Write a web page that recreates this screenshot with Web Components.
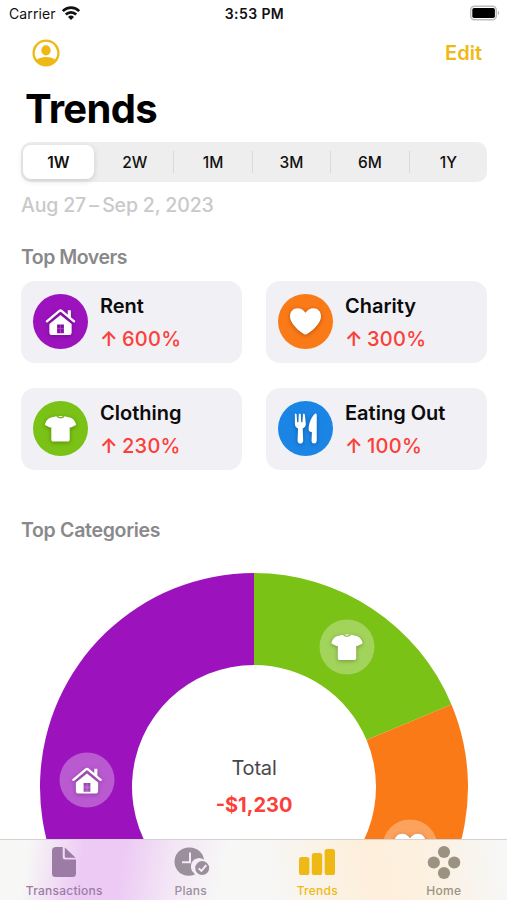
<!DOCTYPE html>
<html lang="en">
<head>
<meta charset="utf-8">
<meta name="viewport" content="width=device-width, initial-scale=1">
<title>Trends</title>
<style>
    * {
        box-sizing: border-box;
    }
    html, body {
        margin: 0;
        height: 900px;
        overflow: hidden;
        background: #fff;
        font-family: Inter, "Liberation Sans", sans-serif;
    }
</style>
</head>
<body>
<trends-app></trends-app>
<script>
const ICONS = {
    house: `<svg viewBox="0 0 32 32"><path d="M2 15.8 14.6 5.3a2.2 2.2 0 0 1 2.8 0L30 15.8" fill="none" stroke="currentColor" stroke-width="2.5" stroke-linecap="round" stroke-linejoin="round"/><path d="M23.5 4.5h3.2v8l-3.2-2.7z"/><path fill-rule="evenodd" d="M16 9.3 27.500 18.5V27a3 3 0 0 1-3 3h-17a3 3 0 0 1-3-3v-8.500zM12.500 19v9h7V19z"/><path d="M15.600 19h.8v9h-.8zM12.500 23h7v.8h-7z" opacity=".25"/></svg>`,
    heart: `<svg viewBox="0 0 32 32"><path d="M16 29.500C14.500 29.500 0 20 0 10.500 0 5.300 3.500 2.200 7.800 2.200c3.600 0 6.300 1.800 8.200 4.700 1.900-2.900 4.600-4.700 8.200-4.700C28.500 2.200 32 5.300 32 10.500c0 9.500-14.500 19-16 19z"/></svg>`,
    shirt: `<svg viewBox="0 0 32 32"><path d="M11.800 3.400c1.400 2.800 7 2.800 8.400 0l5.500 1.200c3 .8 4.700 2.500 6.200 6.400.3.900 0 1.400-.8 1.800l-4.300 2.200c-.8.300-1.300.1-1.300-.7v12.500c0 1.800-.8 2.700-2.500 2.700H9c-1.700 0-2.500-.9-2.500-2.700V14.300c0 .8-.5 1-1.300.7L.9 12.800c-.8-.4-1.100-.9-.8-1.800 1.500-3.900 3.200-5.600 6.200-6.400z"/><path d="M13.500 3.200h5c-.9 1.500-4.100 1.500-5 0z"/></svg>`,
    fork: `<svg viewBox="0 0 32 32"><path d="M5 1.200q.9-1.400 1.800 0l.6 8.300h1.200l.5-8.300q1-1.400 2 0l.5 8.300h1.200l.6-8.300q.9-1.400 1.800 0l1.100 9.300c.3 2.900-1 4.500-3.200 5.600l.5 12.600q-.3 2.900-2.900 2.900t-2.900-2.900l.5-12.600c-2.200-1.100-3.500-2.700-3.200-5.600z"/><path d="M27.600 2v26.900q-.3 2.700-2.700 2.700t-2.700-2.700l.4-9.100c-2.700-.4-3.600-1.500-3.300-4.200.4-5.200 2.900-11.800 6.400-14.700q1.700-.9 1.900 1.100z"/></svg>`,
    person: `<svg viewBox="0 0 28 28"><path fill-rule="evenodd" d="M14 .4a13.600 13.600 0 1 1 0 27.200A13.600 13.600 0 0 1 14 .4zm0 2.400a11.200 11.200 0 0 0-9 17.800c2-1.700 5.100-2.700 9-2.700s7 1 9 2.700A11.200 11.200 0 0 0 14 2.800z"/><ellipse cx="14" cy="11.400" rx="4.700" ry="5.100"/></svg>`,
    wifi: `<svg viewBox="0 0 18 14"><g fill="none" stroke="currentColor" stroke-width="2.700"><path d="M.8 5.100a11.600 11.600 0 0 1 16.400 0"/><path d="M3.800 8.500a7.400 7.400 0 0 1 10.400 0"/></g><path d="m9 14-3-3a4.300 4.300 0 0 1 6 0z"/></svg>`,
    battery: `<svg viewBox="0 0 30 14"><rect x=".7" y=".2" width="25.600" height="13.600" rx="3.800" fill="#fff" stroke="#bcbcbc" stroke-width="1.500"/><rect x="2.300" y="2" width="22.600" height="10" rx="1.800"/><path d="M27.800 4.800c2 .8 2 3.600 0 4.400z" fill="#bcbcbc"/></svg>`,
    document: `<svg viewBox="0 0 36 34"><path d="M10 2h6.700v10a2.500 2.500 0 0 0 2.500 2.500H30V28.500a3.500 3.500 0 0 1-3.500 3.500H9.500A3.500 3.500 0 0 1 6 28.500V6a4 4 0 0 1 4-4z"/><path d="M18.800 2.400 29.600 12.700h-9.700a1.100 1.100 0 0 1-1.100-1.100z"/></svg>`,
    clock: `<svg viewBox="0 0 36 34"><g transform="translate(1 .5)"><path fill-rule="evenodd" d="M16 2a14.200 14.200 0 0 1 14 12.200 8.300 8.300 0 0 0-9.800 13.500c.3.700.7 1.200.7 1.200A14.200 14.200 0 1 1 16 2zm-1 5v8.800H8v1.900h9V7z"/><path fill-rule="evenodd" d="M28.200 15.600a7 7 0 1 1 0 14 7 7 0 0 1 0-14zm3.300 3.500-4.200 5-2-1.900-1.300 1.300 3.500 3.300 5.500-6.600z"/></g></svg>`,
    bars: `<svg viewBox="0 0 36 34"><rect y="12" width="10.400" height="18" rx="2.600"/><rect x="12.800" y="8" width="10.400" height="22" rx="2.600"/><rect x="25.600" y="4" width="10.400" height="26" rx="2.600"/></svg>`,
    dots: `<svg viewBox="0 0 36 34"><circle cx="18" cy="7" r="6.100"/><circle cx="7.800" cy="17.500" r="6.100"/><circle cx="28.200" cy="17.500" r="6.100"/><circle cx="18" cy="28" r="6.100"/></svg>`
};

class AppIcon extends HTMLElement {

    constructor() {
        super();
        this.shadowDOM = this.attachShadow({ mode: "open" });
    }

    connectedCallback() {
        this.shadowDOM.innerHTML = `
        <style>
            :host {
                display: block;
                flex: none;
            }
            svg {
                display: block;
                width: 100%;
                height: 100%;
                fill: currentColor;
                overflow: visible;
            }
        </style>
        ${ICONS[this.getAttribute("name")]}`;
    }
}

customElements.define("app-icon", AppIcon);

class StatusBar extends HTMLElement {

    constructor() {
        super();
        this.shadowDOM = this.attachShadow({ mode: "open" });
        this.shadowDOM.innerHTML = `
        <style>
            :host {
                display: grid;
                grid-template-columns: 1fr auto 1fr;
                align-items: center;
                height: 28px;
                padding: 0 7px 0 9px;
                color: #111;
                font-size: 14px;
                line-height: 18px;
            }
            .carrier {
                display: flex;
                align-items: center;
                gap: 6px;
                letter-spacing: 0.1px;
            }
            .time {
                font-weight: 600;
                letter-spacing: 0.4px;
            }
            .wifi {
                width: 18px;
                height: 14px;
                margin-top: -2px;
            }
            .battery {
                width: 30px;
                height: 14px;
                justify-self: end;
                margin-top: -2px;
                color: #000;
            }
        </style>
        <div class="carrier"><span>Carrier</span><app-icon class="wifi" name="wifi"></app-icon></div>
        <div class="time">3:53 PM</div>
        <app-icon class="battery" name="battery"></app-icon>`;
    }
}

customElements.define("status-bar", StatusBar);

class NavHeader extends HTMLElement {

    constructor() {
        super();
        this.shadowDOM = this.attachShadow({ mode: "open" });
        this.shadowDOM.innerHTML = `
        <style>
            :host {
                display: block;
            }
            .actions {
                display: flex;
                justify-content: space-between;
                align-items: center;
                height: 50px;
                padding: 0 25px 0 32px;
                color: #efb915;
            }
            app-icon {
                width: 28px;
                height: 28px;
            }
            .edit {
                font-size: 20px;
                font-weight: 600;
            }
            h1 {
                margin: 0;
                padding: 6px 25px 0;
                font-size: 40px;
                line-height: 50px;
                font-weight: 700;
                letter-spacing: -0.7px;
                color: #000;
            }
        </style>
        <div class="actions">
            <app-icon name="person"></app-icon>
            <span class="edit">Edit</span>
        </div>
        <h1><slot></slot></h1>`;
    }
}

customElements.define("nav-header", NavHeader);

class SegmentedControl extends HTMLElement {

    constructor() {
        super();
        this.shadowDOM = this.attachShadow({ mode: "open" });
    }

    connectedCallback() {
        const items = this.getAttribute("items").split(",");
        this.shadowDOM.innerHTML = `
        <style>
            :host {
                display: flex;
                align-items: center;
                height: 40px;
                border-radius: 10px;
                background: #eee;
                color: #111;
                font-size: 15.5px;
                font-weight: 500;
            }
            .segment {
                flex: 1;
                display: flex;
                align-items: center;
                justify-content: center;
                height: 22px;
                border-left: 1px solid #d9d9db;
            }
            .segment.selected {
                flex: none;
                width: 71px;
                height: 34px;
                margin: 0 1px 0 2px;
                border: 0;
                border-radius: 8px;
                background: #fff;
                font-weight: 600;
                box-shadow: 0 2px 6px rgba(0, 0, 0, 0.14);
            }
            .selected + .segment {
                border-color: transparent;
            }
        </style>
        ${items.map((item, i) => `<div class="segment${i === 0 ? " selected" : ""}">${item}</div>`).join("")}`;
    }
}

customElements.define("segmented-control", SegmentedControl);

class MoverCard extends HTMLElement {

    constructor() {
        super();
        this.shadowDOM = this.attachShadow({ mode: "open" });
    }

    connectedCallback() {
        this.shadowDOM.innerHTML = `
        <style>
            :host {
                display: flex;
                align-items: center;
                gap: 12px;
                height: 82px;
                padding: 0 12px;
                border-radius: 14px;
                background: #f1f0f5;
            }
            .badge {
                display: flex;
                align-items: center;
                justify-content: center;
                width: 55px;
                height: 55px;
                margin-top: -1px;
                border-radius: 50%;
                background: ${this.getAttribute("color")};
                color: #fff;
            }
            app-icon {
                width: 31px;
                height: 31px;
                filter: drop-shadow(0 1px 2px rgba(0, 0, 0, 0.3));
            }
            .name, .change {
                font-size: 20px;
                line-height: 33px;
                white-space: nowrap;
            }
            .name {
                padding-top: 1px;
                font-weight: 600;
                color: #0b0b0c;
            }
            .change {
                display: flex;
                gap: 4px;
                font-weight: 500;
                letter-spacing: 0.3px;
                color: #fb4039;
            }
            .arrow {
                font-weight: 600;
            }
        </style>
        <div class="badge"><app-icon name="${this.getAttribute("icon")}"></app-icon></div>
        <div>
            <div class="name"><slot></slot></div>
            <div class="change"><span class="arrow">↑</span><span>${this.getAttribute("change")}</span></div>
        </div>`;
    }
}

customElements.define("mover-card", MoverCard);

class CategoryChart extends HTMLElement {

    constructor() {
        super();
        this.shadowDOM = this.attachShadow({ mode: "open" });
    }

    set categories(categories) {
        this._categories = categories;
        this.render();
    }

    point(radius, angle) {
        return [214 + radius * Math.sin(angle), 214 - radius * Math.cos(angle)];
    }

    render() {
        const total = this._categories.reduce((sum, category) => sum + category.amount, 0);
        let start = 0;
        let slices = "";
        let badges = "";
        for (const category of this._categories) {
            const end = start + category.amount / total * Math.PI * 2;
            const middle = this.point(167, (start + end) / 2);
            slices += `<path fill="${category.color}" d="M${this.point(214, start)}A214 214 0 0 1 ${this.point(214, end)}L${this.point(122, end)}A122 122 0 0 0 ${this.point(122, start)}Z"/>`;
            badges += `<div class="badge" style="left:${middle[0]}px;top:${middle[1]}px"><app-icon name="${category.icon}"></app-icon></div>`;
            start = end;
        }
        this.shadowDOM.innerHTML = `
        <style>
            :host {
                display: flex;
                flex-direction: column;
                align-items: center;
                justify-content: center;
                position: relative;
                width: 428px;
                height: 428px;
            }
            svg {
                position: absolute;
                inset: 0;
            }
            /* badges sit on the middle of each slice */
            .badge {
                position: absolute;
                display: flex;
                align-items: center;
                justify-content: center;
                width: 55px;
                height: 55px;
                border-radius: 50%;
                background: rgba(255, 255, 255, 0.3);
                color: #fff;
                transform: translate(-50%, -50%);
            }
            app-icon {
                width: 31px;
                height: 31px;
                filter: drop-shadow(0 1px 2px rgba(0, 0, 0, 0.3));
            }
            .label, .total {
                position: relative;
                font-size: 20px;
                line-height: 37px;
            }
            .label {
                padding-top: 1px;
                letter-spacing: -0.2px;
                color: #48484a;
            }
            .total {
                font-weight: 700;
                color: #fb4039;
            }
        </style>
        <svg width="428" height="428" viewBox="0 0 428 428">${slices}</svg>
        ${badges}
        <div class="label">Total</div>
        <div class="total">-$${total.toLocaleString("en-US")}</div>`;
    }
}

customElements.define("category-chart", CategoryChart);

class TabItem extends HTMLElement {

    constructor() {
        super();
        this.shadowDOM = this.attachShadow({ mode: "open" });
    }

    connectedCallback() {
        this.shadowDOM.innerHTML = `
        <style>
            :host {
                display: flex;
                flex: 1;
                flex-direction: column;
                align-items: center;
                padding-top: 5px;
                color: ${this.getAttribute("color")};
                font-size: 12px;
                font-weight: 500;
                line-height: 16px;
                letter-spacing: 0.25px;
            }
            app-icon {
                width: 36px;
                height: 34px;
                margin-bottom: 4px;
            }
        </style>
        <app-icon name="${this.getAttribute("icon")}"></app-icon>
        <span><slot></slot></span>`;
    }
}

customElements.define("tab-item", TabItem);

class TabBar extends HTMLElement {

    constructor() {
        super();
        this.shadowDOM = this.attachShadow({ mode: "open" });
        this.shadowDOM.innerHTML = `
        <style>
            :host {
                display: flex;
                position: absolute;
                left: 0;
                right: 0;
                bottom: 0;
                height: 60px;
                padding-left: 1px;
                border-top: 1px solid #d4d2d5;
                background:
                    linear-gradient(100deg, rgba(236, 200, 244, 0) 30px, rgba(236, 200, 244, 0.95) 85px, rgba(236, 200, 244, 0.95) 125px, rgba(236, 200, 244, 0.4) 170px, rgba(236, 200, 244, 0) 225px),
                    linear-gradient(80deg, rgba(254, 238, 216, 0) 270px, rgba(254, 238, 216, 0.9) 365px, rgba(254, 238, 216, 0.8) 415px, rgba(254, 238, 216, 0) 500px),
                    #f7f7f6;
            }
        </style>
        <slot></slot>`;
    }
}

customElements.define("tab-bar", TabBar);

class TrendsApp extends HTMLElement {

    constructor() {
        super();
        this.shadowDOM = this.attachShadow({ mode: "open" });
    }

    connectedCallback() {
        this.shadowDOM.innerHTML = `
        <style>
            :host {
                display: block;
                position: relative;
                height: 900px;
                overflow: hidden;
                background: #fff;
            }
            main {
                padding: 8px 20px 0 21px;
            }
            .range {
                margin-top: 10px;
                font-size: 19.5px;
                line-height: 26px;
                font-weight: 500;
                letter-spacing: -0.15px;
                color: #c9c9cb;
            }
            h2 {
                margin: 0;
                font-size: 19.5px;
                line-height: 26px;
                font-weight: 600;
                letter-spacing: -0.3px;
                color: #89898b;
            }
            .movers-title {
                margin-top: 25.5px;
                letter-spacing: -0.5px;
            }
            .movers {
                display: grid;
                grid-template-columns: 1fr 1fr;
                gap: 25px 24px;
                margin: 11.5px 0 46.5px;
            }
            category-chart {
                margin: 30px auto 0;
            }
        </style>
        <status-bar></status-bar>
        <nav-header>Trends</nav-header>
        <main>
            <segmented-control items="1W,2W,1M,3M,6M,1Y"></segmented-control>
            <div class="range">Aug 27&thinsp;–&thinsp;Sep 2, 2023</div>
            <h2 class="movers-title">Top Movers</h2>
            <div class="movers">
                <mover-card icon="house" color="#9c13be" change="600%">Rent</mover-card>
                <mover-card icon="heart" color="#fb7a18" change="300%">Charity</mover-card>
                <mover-card icon="shirt" color="#7ac215" change="230%">Clothing</mover-card>
                <mover-card icon="fork" color="#1b85e6" change="100%">Eating Out</mover-card>
            </div>
            <h2>Top Categories</h2>
            <category-chart></category-chart>
        </main>
        <tab-bar>
            <tab-item icon="document" color="#9c7ba5">Transactions</tab-item>
            <tab-item icon="clock" color="#9b8f9e">Plans</tab-item>
            <tab-item icon="bars" color="#efb915">Trends</tab-item>
            <tab-item icon="dots" color="#9c9282">Home</tab-item>
        </tab-bar>`;
        this.shadowDOM.querySelector("category-chart").categories = [
            { icon: "shirt", color: "#7ac215", amount: 230 },
            { icon: "heart", color: "#fb7a18", amount: 300 },
            { icon: "fork", color: "#1b85e6", amount: 100 },
            { icon: "house", color: "#9c13be", amount: 600 }
        ];
    }
}

customElements.define("trends-app", TrendsApp);
</script>
</body>
</html>
